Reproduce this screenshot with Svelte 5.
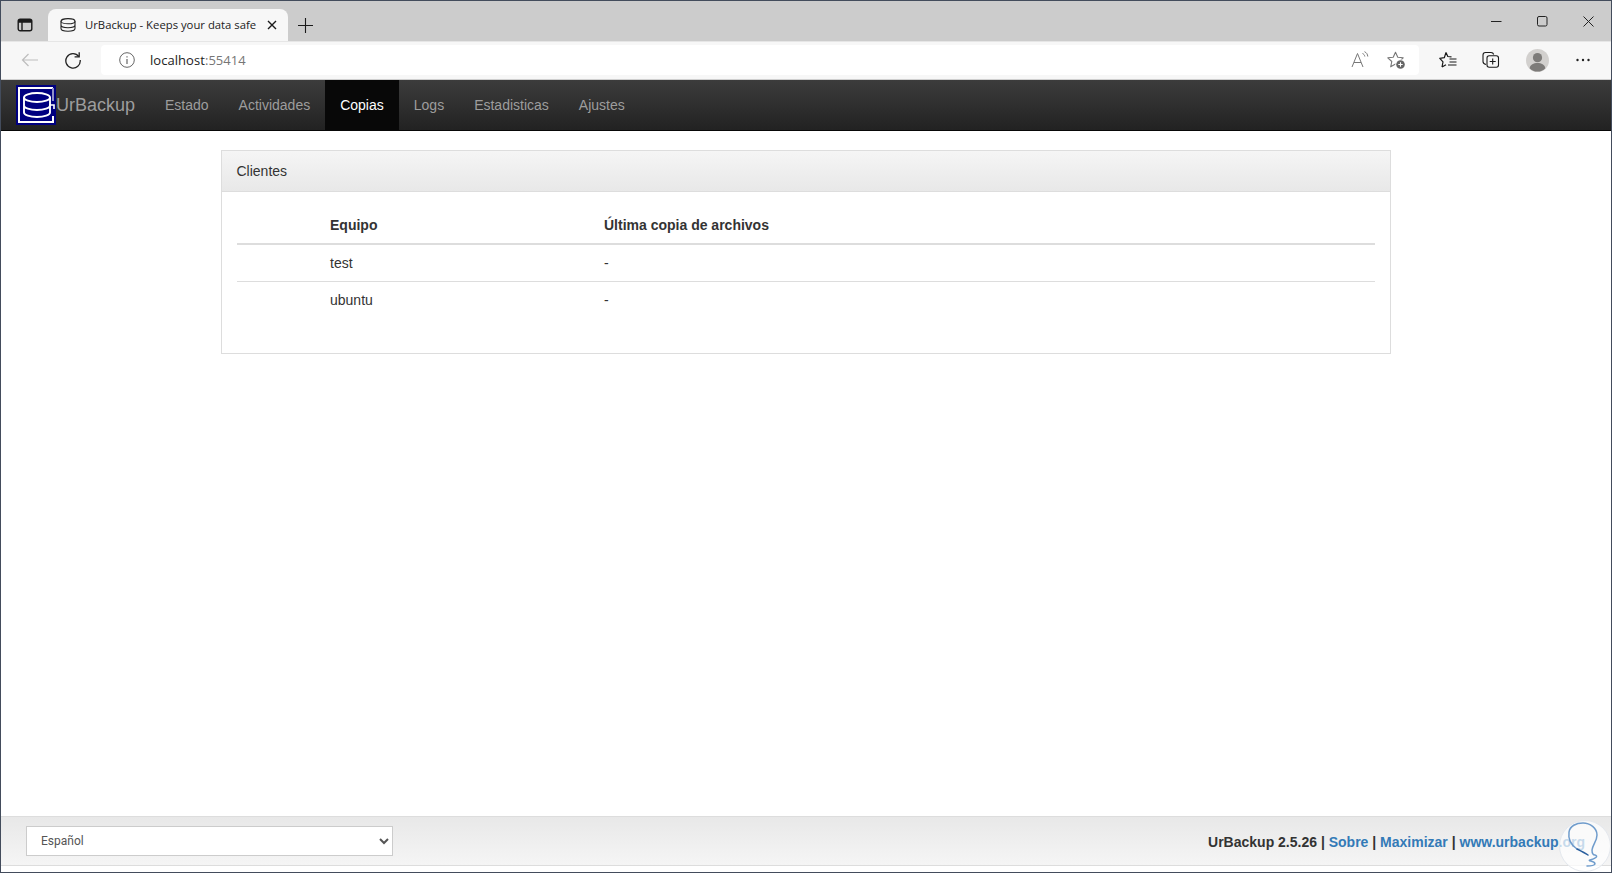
<script>
  const tabs = ['Estado', 'Actividades', 'Copias', 'Logs', 'Estadisticas', 'Ajustes'];
  const clients = ['test', 'ubuntu'];
</script>

<div class="window">
  <div class="tabstrip">
    <div class="tabbtn">
      <svg width="16" height="16" viewBox="0 0 16 16" fill="none" stroke="#1a1a1a" stroke-width="1.4"><rect x="1.2" y="2.2" width="13.6" height="11.6" rx="2"/><path d="M1.2 5h13.6M5 5v8.8"/><path d="M1.6 3h12.8v2H1.6z" fill="#1a1a1a" stroke="none"/></svg>
    </div>
    <div class="tab">
      <svg width="18" height="14" viewBox="0 0 18 14" fill="none" stroke="#222" stroke-width="1.1"><ellipse cx="9" cy="3.2" rx="7" ry="2.6"/><path d="M2 3.2v7.4c0 1.500 3 2.700 7 2.700s7-1.200 7-2.700V3.200M2 7c0 1.500 3 2.700 7 2.700S16 8.500 16 7"/></svg>
      <span class="tabtitle">UrBackup - Keeps your data safe</span>
      <svg class="tabclose" width="10" height="10" viewBox="0 0 10 10" stroke="#1a1a1a" stroke-width="1.4"><path d="M1 1l8 8M9 1l-8 8"/></svg>
    </div>
    <svg class="newtab" width="15" height="15" viewBox="0 0 15 15" stroke="#1a1a1a" stroke-width="1.1"><path d="M7.500 0v15M0 7.500h15"/></svg>
    <div class="winctrls">
      <svg width="11" height="11" viewBox="0 0 11 11" stroke="#222" stroke-width="1"><path d="M0 5.500h10.500"/></svg>
      <svg width="11" height="11" viewBox="0 0 11 11" fill="none" stroke="#222" stroke-width="1"><rect x=".5" y=".5" width="9.500" height="9.500" rx="1.500"/></svg>
      <svg width="11" height="11" viewBox="0 0 11 11" stroke="#222" stroke-width="1"><path d="M.5.500l10 10M10.500.500l-10 10"/></svg>
    </div>
  </div>

  <div class="toolbar">
    <svg class="back" width="18" height="14" viewBox="0 0 18 14" fill="none" stroke="#bdbdbd" stroke-width="1.2"><path d="M17 7H1.500M7.500 1L1.500 7l6 6"/></svg>
    <svg class="reload" width="18" height="18" viewBox="0 0 18 18" fill="none" stroke="#222" stroke-width="1.300"><path d="M14.800 5.500A7.200 7.200 0 1 0 16.200 9"/><path d="M15.200 1.200v4.600h-4.600"/></svg>
    <div class="omnibox">
      <svg class="info" width="16" height="16" viewBox="0 0 16 16" fill="none" stroke="#666" stroke-width="1"><circle cx="8" cy="8" r="7.300"/><path d="M8 7v5M8 4.200v1.400" stroke-width="1.200"/></svg>
      <span class="url">localhost<span class="port">:55414</span></span>
      <div class="omni-right">
        <svg width="20" height="18" viewBox="0 0 20 18" fill="none" stroke="#777" stroke-width="1"><path d="M1 16L6.500 2.500 12 16M3 11.500h7"/><path d="M11.500 2.500c1.500.7 2 1.500 2.300 3M13.500.7c2.200 1 3 2.500 3.300 4.800"/></svg>
        <svg width="19" height="19" viewBox="0 0 19 19"><path d="M8.500 1.200l2.300 5 5.400.6-4 3.700 1.100 5.300-4.800-2.700-4.800 2.700 1.100-5.300-4-3.700 5.400-.6z" fill="none" stroke="#777" stroke-width="1.100" stroke-linejoin="round"/><circle cx="13.500" cy="13.500" r="5.200" fill="#fff"/><circle cx="13.500" cy="13.500" r="4.300" fill="#666"/><path d="M13.500 11.300v4.400M11.300 13.500h4.400" stroke="#fff" stroke-width="1.100"/></svg>
      </div>
    </div>
    <div class="tools">
      <svg class="t-fav" width="18" height="18" viewBox="0 0 18 18" fill="none" stroke="#1a1a1a" stroke-width="1.200" stroke-linejoin="round"><path d="M7 1.500l1.800 4 3.700.4M3 16l1-5.200L.8 7.300l4.500-.6L7 1.500M3 16l4-2.300"/><path d="M10.500 8h7M10.500 11h7M9 14h8.500"/></svg>
      <svg class="t-coll" width="18" height="18" viewBox="0 0 18 18" fill="none" stroke="#1a1a1a" stroke-width="1.100"><path d="M4 13.500C2 13 1 12 1 10.500V4c0-1.500 1-2.500 2.500-2.500h5.500c1.300 0 2.300.7 2.700 2"/><rect x="5" y="4.800" width="11.500" height="11.500" rx="2.200"/><path d="M10.700 7.500v6M7.700 10.500h6"/></svg>
      <svg class="avatar" width="23" height="23" viewBox="0 0 24 24"><circle cx="12" cy="12" r="12" fill="#d2d0ce"/><circle cx="12" cy="9" r="4.800" fill="#7d7b79"/><path d="M3.800 20c.8-3.600 4-5.300 8.200-5.300s7.400 1.700 8.200 5.300c-2 2.200-5 3.500-8.200 3.500s-6.200-1.300-8.200-3.500z" fill="#7d7b79"/></svg>
      <svg class="more" width="14" height="4" viewBox="0 0 14 4" fill="#222"><circle cx="1.500" cy="2" r="1.200"/><circle cx="7" cy="2" r="1.200"/><circle cx="12.500" cy="2" r="1.200"/></svg>
    </div>
  </div>

  <nav class="navbar">
    <div class="brand">
      <svg width="40" height="40" viewBox="0 0 40 40">
        <rect width="40" height="40" fill="#000080"/>
        <path d="M37 3H3v34h34v-6" fill="none" stroke="#fff" stroke-width="2"/>
        <path d="M37 3v13" fill="none" stroke="#8f8fc8" stroke-width="2"/>
        <g fill="none" stroke="#fff" stroke-width="1.900"><ellipse cx="21" cy="12.500" rx="13" ry="4.500"/><path d="M8 12.500v15c0 2.500 5.800 4.500 13 4.500s13-2 13-4.500v-15M8 20.500c0 2.500 5.800 4.500 13 4.500s13-2 13-4.500"/></g>
        <path d="M33 20h5v4" fill="none" stroke="#fff" stroke-width="1.600"/>
      </svg>
      <span>UrBackup</span>
    </div>
    <ul>
      {#each tabs as t}
        <li class:active={t === 'Copias'}>{t}</li>
      {/each}
    </ul>
  </nav>

  <main>
    <section class="panel">
      <h2>Clientes</h2>
      <div class="panel-body">
        <table>
          <colgroup><col class="c1" /><col class="c2" /><col /></colgroup>
          <thead>
            <tr><th></th><th>Equipo</th><th>Última copia de archivos</th></tr>
          </thead>
          <tbody>
            {#each clients as c}
              <tr><td></td><td>{c}</td><td>-</td></tr>
            {/each}
          </tbody>
        </table>
      </div>
    </section>
  </main>

  <footer>
    <select><option>Español</option></select>
    <div class="foot-text">UrBackup 2.5.26 | <a href="#s">Sobre</a> | <a href="#m">Maximizar</a> | <a href="#u">www.urbackup.org</a></div>
  </footer>
  <div class="foot-gap"></div>

  <svg class="mark" width="59" height="59" viewBox="0 0 59 59" fill="none">
    <circle cx="33" cy="33" r="25.500" fill="#fff" fill-opacity=".72" stroke="#e4e8ee" stroke-width="1"/>
    <path d="M25 36C19 32 16 26 17 19 18 13 24 10 31 10 38 10 45 15 45 22 45 28 41 31 40 37 40 40 41 42 43 42 47 43 43 46 38 47 35 48 43 48 43 51 42 53 38 53 35 53" stroke="#6f9ccc" stroke-width="1.500" stroke-linecap="round"/>
    <path d="M25 36C29 38 33 40 36 42" stroke="#2a5f9e" stroke-width="1.500" stroke-linecap="round"/>
  </svg>
</div>

<style>
  :global(html), :global(body) { margin: 0; background: #fff; overflow: hidden; }
  .window {
    position: relative;
    box-sizing: border-box;
    width: 1612px;
    height: 873px;
    border: 1px solid #434c5c;
    display: flex;
    flex-direction: column;
    overflow: hidden;
    font-family: "Liberation Sans", Arial, sans-serif;
    font-size: 14px;
    line-height: 20px;
    color: #333;
  }
  svg { display: block; flex: none; }

  .tabstrip {
    height: 40px;
    flex: none;
    background: #cccccc;
    display: flex;
    align-items: flex-end;
  }
  .tabbtn { width: 47px; height: 32px; display: flex; align-items: center; justify-content: center; box-sizing: border-box; padding-left: 1px; }
  .tab {
    width: 240px;
    height: 32px;
    box-sizing: border-box;
    background: #f7f7f7;
    border-radius: 8px 8px 0 0;
    display: flex;
    align-items: center;
    padding: 0 11px 0 11px;
    font-family: "Open Sans", "Noto Sans", sans-serif;
    color: #222;
  }
  .tabtitle { margin-left: 8px; flex: 1; white-space: nowrap; overflow: hidden; font-size: 11.300px; }
  .newtab { margin: 0 0 8px 10px; }
  .winctrls { margin-left: auto; display: flex; gap: 35px; align-items: center; padding-right: 17px; height: 40px; }

  .toolbar {
    height: 39px;
    flex: none;
    box-sizing: border-box;
    background: #f7f7f7;
    border-top: 1px solid #e6e6e6;
    border-bottom: 1px solid #cfcfcf;
    padding-bottom: 1px;
    display: flex;
    align-items: center;
  }
  .back { margin-left: 20px; }
  .reload { margin-left: 25px; }
  .omnibox {
    margin-left: 19px;
    width: 1318px;
    height: 30px;
    background: #fff;
    border-radius: 4px;
    display: flex;
    align-items: center;
    box-sizing: border-box;
    padding: 0 13px 0 18px;
  }
  .url { margin-left: 15px; font-family: "Open Sans", "Noto Sans", sans-serif; font-size: 13px; color: #222; letter-spacing: .05px; }
  .port { color: #767676; }
  .omni-right { margin-left: auto; display: flex; gap: 16px; align-items: center; }
  .tools { display: flex; align-items: center; margin-left: 20px; }
  .t-coll { margin-left: 25px; }
  .avatar { margin-left: 26px; }
  .more { margin-left: 27px; }

  .navbar {
    height: 51px;
    flex: none;
    box-sizing: border-box;
    background: linear-gradient(to bottom, #3c3c3c, #222222);
    border-bottom: 1px solid #080808;
    display: flex;
    padding-left: 15px;
  }
  .brand { display: flex; align-items: center; width: 134px; height: 50px; font-size: 18px; color: #9d9d9d; }
  .navbar ul { display: flex; margin: 0; padding: 0; list-style: none; }
  .navbar li { padding: 15px; color: #9d9d9d; height: 50px; box-sizing: border-box; }
  .navbar li.active { background: #080808; color: #fff; }

  main { flex: 1; padding: 19px 0 0 220px; }
  .panel { width: 1170px; box-sizing: border-box; border: 1px solid #ddd; }
  h2 {
    margin: 0;
    padding: 10px 14.500px;
    font-size: 14px;
    font-weight: 400;
    line-height: 20px;
    background: linear-gradient(to bottom, #f5f5f5, #e8e8e8);
    border-bottom: 1px solid #ddd;
  }
  .panel-body { padding: 15px; }
  table { width: 100%; border-collapse: collapse; table-layout: fixed; margin-bottom: 20px; }
  .c1 { width: 85px; }
  .c2 { width: 274px; }
  th, td { padding: 8px; text-align: left; line-height: 20px; }
  th { border-bottom: 2px solid #ddd; font-weight: 700; }
  td { border-top: 1px solid #ddd; }
  tbody tr:first-child td { border-top: 0; }

  footer {
    height: 50px;
    flex: none;
    box-sizing: border-box;
    background: linear-gradient(to bottom, #e8e8e8, #f5f5f5);
    border-top: 1px solid #ddd;
    border-bottom: 1px solid #ddd;
    display: flex;
    align-items: center;
    justify-content: space-between;
    padding: 0 26px 0 25px;
  }
  select {
    width: 367px;
    height: 30px;
    box-sizing: border-box;
    background: #fff;
    border: 1px solid #ccc;
    border-radius: 0;
    padding: 5px 10px;
    font-family: "Roboto", "Liberation Sans", sans-serif;
    font-size: 12px;
    color: #555;
  }
  .foot-text { font-weight: 700; color: #333; white-space: nowrap; position: relative; top: 1px; }
  .foot-text a { color: #337ab7; text-decoration: none; }
  .foot-gap { height: 6px; flex: none; }
  .mark { position: absolute; right: 0; bottom: 0; }
</style>
